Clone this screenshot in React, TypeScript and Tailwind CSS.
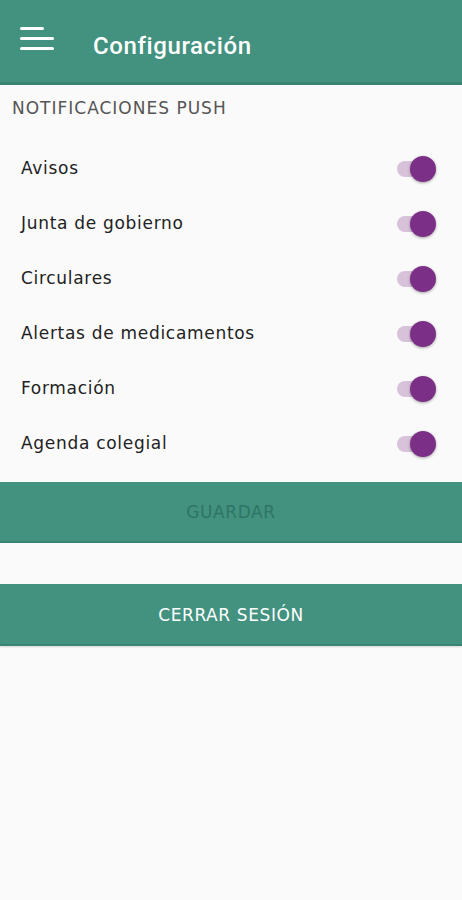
import React, { useState } from 'react';

const items = [
  'Avisos',
  'Junta de gobierno',
  'Circulares',
  'Alertas de medicamentos',
  'Formación',
  'Agenda colegial',
];

const Toggle = ({ on, onClick }: { on: boolean; onClick: () => void }) => (
  <button onClick={onClick} className="relative w-[42px] h-[26px] flex items-center">
    <span className={`absolute left-[1px] w-[38px] h-[16px] rounded-full ${on ? 'bg-[#d8c2da]' : 'bg-[#bdbdbd]'}`} />
    <span
      className={`absolute w-[26px] h-[26px] rounded-full shadow-[0_1px_3px_rgba(0,0,0,0.35)] ${
        on ? 'left-[14px] bg-[#7c2f86]' : 'left-0 bg-[#f1f1f1]'
      }`}
    />
  </button>
);

export default function App() {
  const [state, setState] = useState(items.map(() => true));

  return (
    <div className="w-[462px] h-[900px] bg-[#fafafa] font-['DejaVu_Sans',sans-serif]">
      <header className="h-[85px] bg-[#42927f] border-b-[3px] border-[#3a8473] flex items-center pb-[1px]">
        <div className="w-[93px] pl-[20px] flex flex-col gap-[7px] -mt-[5px]">
          <span className="block w-[24px] h-[3px] bg-white rounded-sm" />
          <span className="block w-[34px] h-[3px] bg-white rounded-sm" />
          <span className="block w-[34px] h-[3px] bg-white rounded-sm" />
        </div>
        <h1 className="text-white text-[24px] font-medium font-['Roboto',sans-serif] tracking-[0.6px] mt-[10px]">
          Configuración
        </h1>
      </header>

      <div className="pl-[12px] pt-[11px] h-[44px] text-[17px] text-[#555] tracking-[1px]">
        NOTIFICACIONES PUSH
      </div>

      <ul className="pt-[12px]">
        {items.map((label, i) => (
          <li key={label} className="h-[55px] flex items-center justify-between pl-[21px] pr-[24px]">
            <span className="text-[17px] text-[#222] tracking-[0.7px]">{label}</span>
            <Toggle
              on={state[i]}
              onClick={() => setState(s => s.map((v, j) => (j === i ? !v : v)))}
            />
          </li>
        ))}
      </ul>

      <div className="mt-[11px] flex flex-col gap-[41px]">
        <button className="h-[61px] w-full pt-[3px] bg-[#42927f] border-b-2 border-[#3a8473] text-[#2f7565] text-[17px] tracking-[0.6px]">
          GUARDAR
        </button>
        <button className="h-[62px] w-full pt-[3px] bg-[#42927f] border-b-2 border-[#3a8473] text-white text-[17px] tracking-[0.6px] shadow-[0_1px_2px_rgba(0,0,0,0.15)]">
          CERRAR SESIÓN
        </button>
      </div>
    </div>
  );
}
